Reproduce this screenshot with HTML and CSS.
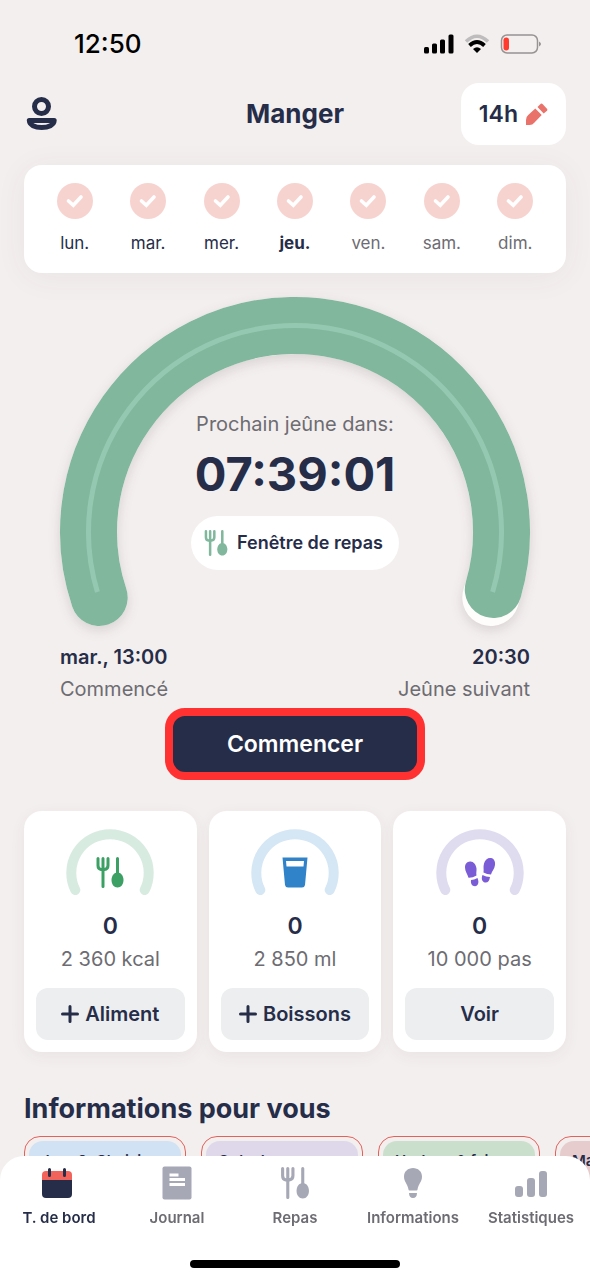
FILE: index.html
```html
<!DOCTYPE html>
<html lang="fr">
<head>
<meta charset="utf-8">
<meta name="viewport" content="width=device-width, initial-scale=1">
<title>Manger</title>
<link rel="stylesheet" href="styles.css">
</head>
<body>
<svg class="sprite" aria-hidden="true">
  <symbol id="cutlery" viewBox="0 0 28 31">
    <path d="M2 1.500V8.500Q2 12 5 12.500H8.500Q12 12 12 8.500V1.500M7 1.500V29.500M21.500 1.500V20" fill="none" stroke="currentColor" stroke-width="3" stroke-linecap="round"/>
    <path d="M21.500 15.500C25 15.500 27.500 19 27.500 23C27.500 27.500 25 30.500 21.500 30.500S15.500 27.500 15.500 23C15.500 19 18 15.500 21.500 15.500Z" fill="currentColor"/>
  </symbol>
  <symbol id="check" viewBox="0 0 36 36">
    <circle cx="18" cy="18" r="18" fill="#f7d3cf"/>
    <path d="M11.500 18L16.300 22.300L24 14" fill="none" stroke="#fff" stroke-width="3.600" stroke-linecap="round"/>
  </symbol>
  <symbol id="gauge" viewBox="0 0 88 67">
    <path d="M9.300 61A38.700 38.700 0 1 1 78.700 61" fill="none" stroke="currentColor" stroke-width="10" stroke-linecap="round"/>
  </symbol>
  <symbol id="plus" viewBox="0 0 18 18">
    <path d="M9 1.500V16.500M1.500 9H16.500" stroke="currentColor" stroke-width="3" stroke-linecap="round"/>
  </symbol>
</svg>

<div class="app">
  <div class="status">
    <span class="clock">12:50</span>
    <span class="signals">
      <svg width="30" height="20" viewBox="0 0 30 20"><rect x="0" y="13" width="5" height="6.500" rx="1.500"/><rect x="8" y="9.500" width="5" height="10" rx="1.500"/><rect x="16" y="5.500" width="5" height="14" rx="1.500"/><rect x="24.500" y="0.500" width="5" height="19" rx="1.500"/></svg>
      <svg width="26" height="20" viewBox="0 0 26 20"><path d="M2 7.500Q13-3 24 7.500" fill="none" stroke="#bfbcbd" stroke-width="3.500"/><path d="M5.500 11.500Q13 4.500 20.500 11.500" fill="none" stroke="#000" stroke-width="3.800"/><path d="M9 15Q13 11.500 17 15L13 19Z"/></svg>
      <svg width="42" height="20" viewBox="0 0 42 20"><rect x="1.500" y="1" width="36" height="18" rx="5.500" fill="none" stroke="#979394" stroke-width="1.500"/><rect x="3.500" y="3.500" width="5.500" height="13" rx="2.700" fill="#ff3b30"/><path d="M39 7.500Q43 10 39 12.500Z" fill="#979394"/></svg>
    </span>
  </div>

  <header class="topbar">
    <button class="profile" aria-label="Profil">
      <svg width="32" height="34" viewBox="0 0 32 34" fill="none" stroke="#262d49" stroke-width="5" stroke-linejoin="round"><circle cx="15.500" cy="9.500" r="7"/><path d="M3.300 23.500H28.200C28 28 22.500 30.500 15.700 30.500S3.500 28 3.300 23.500Z"/></svg>
    </button>
    <h1 class="title">Manger</h1>
    <button class="plan">14h
      <svg width="22" height="23" viewBox="0 0 22 23" fill="#e9726a"><path d="M0 22V17Q0 13.800 2.200 12L9.300 5.500L15.700 12L8.500 19.500Q6.500 22 3.500 22Z"/><path d="M11.500 4L14.800 0.800Q15.700 0.200 16.500 1L21.200 6Q21.800 7 21 7.700L17.700 10.500Z"/></svg>
    </button>
  </header>

  <main class="content">
    <ul class="week">
      <li class="day"><svg class="tick"><use href="#check"/></svg>lun.</li>
      <li class="day"><svg class="tick"><use href="#check"/></svg>mar.</li>
      <li class="day"><svg class="tick"><use href="#check"/></svg>mer.</li>
      <li class="day today"><svg class="tick"><use href="#check"/></svg>jeu.</li>
      <li class="day later"><svg class="tick"><use href="#check"/></svg>ven.</li>
      <li class="day later"><svg class="tick"><use href="#check"/></svg>sam.</li>
      <li class="day later"><svg class="tick"><use href="#check"/></svg>dim.</li>
    </ul>

    <section class="timer">
      <svg class="arc" viewBox="0 0 470 330" fill="none" stroke-width="57" stroke-linecap="round" aria-hidden="true">
        <path class="arc-track" d="M39.200 300.500A206.500 206.500 0 1 1 430.800 300.500" stroke="#fefdfc"/>
        <path d="M39.200 300.500A206.500 206.500 0 1 1 433.300 292.500" stroke="#80b79d"/>
        <path d="M37.400 295A206.500 206.500 0 1 1 432.600 295" stroke="#95c8b0" stroke-width="5" stroke-linecap="butt"/>
      </svg>
      <div class="readout">
        <p class="caption">Prochain jeûne dans:</p>
        <p class="countdown">07:39:01</p>
        <button class="phase"><svg class="phase-icon"><use href="#cutlery"/></svg>Fenêtre de repas</button>
      </div>
    </section>

    <div class="bounds">
      <div><strong class="bound-time">mar., 13:00</strong><span class="bound-label">Commencé</span></div>
      <div class="bound-end"><strong class="bound-time">20:30</strong><span class="bound-label">Jeûne suivant</span></div>
    </div>

    <button class="start">Commencer</button>

    <section class="stats">
      <article class="stat">
        <div class="meter food"><svg class="ring"><use href="#gauge"/></svg><svg class="glyph"><use href="#cutlery"/></svg></div>
        <strong class="value">0</strong><span class="goal">2 360 kcal</span>
        <button class="action"><svg class="plus"><use href="#plus"/></svg>Aliment</button>
      </article>
      <article class="stat">
        <div class="meter drink"><svg class="ring"><use href="#gauge"/></svg><svg class="glyph" viewBox="0 0 28 31"><path fill-rule="evenodd" d="M1.500 0.500H26.500L24 28Q23.500 30.500 21 30.500H7Q4.500 30.500 4 28ZM5 4L5.500 9.500H22.500L23 4Z" fill="currentColor"/></svg></div>
        <strong class="value">0</strong><span class="goal">2 850 ml</span>
        <button class="action"><svg class="plus"><use href="#plus"/></svg>Boissons</button>
      </article>
      <article class="stat">
        <div class="meter steps"><svg class="ring"><use href="#gauge"/></svg><svg class="glyph wide" viewBox="0 0 32 31" fill="currentColor"><path d="M6 4.500C9 4 12 7 12.500 11.500C12.700 14 12 16 12.500 18.500Q8.500 21 4.500 20.800C3.500 17 1 14.500 1 10.500C1 7 3 4.700 6 4.500ZM7 23Q10 23 13.500 21C15.500 25.500 14 29 11 29.200C8 29.200 6.500 26.500 7 23ZM27 1C30 1.500 31.500 4.500 31 8C30.500 12 28 14 27 17.500Q23 17.500 19.500 15.500C20 12 19 10 20 6.500C21 2.500 24 0.500 27 1ZM18.500 18Q22 20 26 20C25.500 24 23.500 26 21 25.500C18 25 17 21.500 18.500 18Z"/></svg></div>
        <strong class="value">0</strong><span class="goal">10 000 pas</span>
        <button class="action">Voir</button>
      </article>
    </section>

    <h2 class="heading">Informations pour vous</h2>
    <div class="stories">
      <a class="story" href="#"><span class="cover blue">Jour 2: Choisir</span></a>
      <a class="story" href="#"><span class="cover lilac">Qu'est-ce que</span></a>
      <a class="story" href="#"><span class="cover green">Horloge &amp; faim</span></a>
      <a class="story" href="#"><span class="cover rose">Manger</span></a>
    </div>
  </main>

  <nav class="tabs">
    <div class="tab-row">
      <a class="tab active" href="#"><svg width="36" height="32" viewBox="0 0 36 32"><path d="M1 13H31V27Q31 31 27 31H5Q1 31 1 27Z" fill="#262d49"/><path d="M1 13V8Q1 4 5 4H27Q31 4 31 8V13Z" fill="#f2635b"/><path d="M8.500 2.500V8.500M23.500 2.500V8.500" stroke="#262d49" stroke-width="3" stroke-linecap="round"/></svg>T. de bord</a>
      <a class="tab" href="#"><svg width="32" height="34" viewBox="0 0 32 34"><rect x="1.500" y="0.500" width="29" height="33" rx="2" fill="#a6a8b5"/><path d="M8.500 9H17.500M8.500 13.500H24M8.500 18.500H24" stroke="#fff" stroke-width="3"/></svg>Journal</a>
      <a class="tab" href="#"><svg width="30" height="32"><use href="#cutlery"/></svg>Repas</a>
      <a class="tab" href="#"><svg width="32" height="32" viewBox="0 0 32 32" fill="#a6a8b5"><path d="M16 1C21 1 25 4.500 25 9.500C25 15 21.500 16.500 20.500 22.500Q20.500 23.500 19.500 23.500H12.500Q11.500 23.500 11.500 22.500C10.500 16.500 7 15 7 9.500C7 4.500 11 1 16 1ZM12 26H20C20 29.500 18.500 31 16 31S12 29.500 12 26Z"/></svg>Informations</a>
      <a class="tab" href="#"><svg width="34" height="32" viewBox="0 0 34 32" fill="#a6a8b5"><rect x="1" y="19" width="8" height="11" rx="3"/><rect x="13" y="11" width="8" height="19" rx="3"/><rect x="25" y="4" width="8" height="26" rx="3"/></svg>Statistiques</a>
    </div>
    <div class="home-bar"></div>
  </nav>
</div>
</body>
</html>
```
FILE: styles.css
```css
* { box-sizing: border-box; }

body, h1, h2, p, ul { margin: 0; padding: 0; }

body {
  background: #f3efee;
  color: #262d49;
  font-family: Inter, "Liberation Sans", sans-serif;
}

button { border: 0; color: inherit; font: inherit; cursor: pointer; }
a { color: inherit; text-decoration: none; }
svg { display: block; flex: none; }
.sprite { position: absolute; width: 0; height: 0; }

.app {
  display: flex;
  flex-direction: column;
  height: 100vh;
  overflow: hidden;
}

.status {
  display: flex;
  align-items: center;
  justify-content: space-between;
  padding: 28px 48px 0 74px;
  line-height: 32px;
}
.clock { color: #000; font-size: 26px; font-weight: 500; }
.signals { display: flex; gap: 10px; }

.topbar {
  display: grid;
  grid-template-columns: 1fr auto 1fr;
  align-items: center;
  padding: 23px 24px 0;
}
.profile { justify-self: start; padding: 0 2px; background: none; }
.title { font-size: 26px; font-weight: 700; line-height: 32px; }
.plan {
  display: flex;
  align-items: center;
  justify-self: end;
  gap: 8px;
  padding: 15px 18px;
  border-radius: 18px;
  background: #fff;
  font-size: 23px;
  font-weight: 600;
  line-height: 32px;
}

.content {
  flex: 1;
  overflow-y: auto;
  padding: 20px 24px 0;
  scrollbar-width: none;
}

.week {
  display: grid;
  grid-template-columns: repeat(7, 1fr);
  padding: 18px 14px;
  border-radius: 18px;
  background: #fff;
  box-shadow: 0 4px 32px rgba(80, 60, 70, 0.06);
  list-style: none;
}
.day {
  display: flex;
  flex-direction: column;
  align-items: center;
  gap: 12px;
  font-size: 17px;
  line-height: 24px;
}
.today { font-weight: 700; }
.later { color: #6d6c72; }
.tick { width: 36px; height: 36px; }

.timer { display: grid; margin: 24px 36px 0; }
.arc { grid-area: 1 / 1; width: 100%; overflow: visible; }
.arc-track { filter: drop-shadow(0 4px 6px rgba(60, 40, 40, 0.14)); }
.readout {
  grid-area: 1 / 1;
  z-index: 1;
  display: flex;
  flex-direction: column;
  align-items: center;
  padding-top: 111px;
}
.caption { color: #6d6c72; font-size: 20px; line-height: 32px; }
.countdown { margin-top: 6px; font-size: 47px; font-weight: 700; line-height: 56px; }
.phase {
  display: flex;
  align-items: center;
  gap: 8px;
  margin-top: 14px;
  padding: 14px 16px 14px 12px;
  border-radius: 27px;
  background: #fff;
  font-size: 18px;
  font-weight: 600;
  line-height: 26px;
}
.phase-icon { width: 26px; height: 26px; color: #80b79d; }

.bounds {
  display: flex;
  justify-content: space-between;
  padding: 14px 36px 0;
  font-size: 20px;
  line-height: 32px;
}
.bound-time, .bound-label { display: block; }
.bound-time { font-weight: 600; }
.bound-label { color: #6d6c72; }
.bound-end { text-align: right; }

.start {
  display: block;
  width: 260px;
  margin: 3px auto 0;
  padding: 12px;
  border: 8px solid #ff3131;
  border-radius: 20px;
  background: #262d49;
  color: #fff;
  font-size: 23px;
  font-weight: 600;
  line-height: 32px;
}

.stats {
  display: grid;
  grid-template-columns: repeat(3, 1fr);
  gap: 12px;
  margin-top: 31px;
}
.stat {
  display: flex;
  flex-direction: column;
  align-items: center;
  padding: 18px 12px 12px;
  border-radius: 18px;
  background: #fff;
  box-shadow: 0 4px 16px rgba(80, 60, 70, 0.06);
}
.meter { display: grid; justify-items: center; align-items: center; }
.ring { grid-area: 1 / 1; width: 88px; height: 67px; }
.glyph { grid-area: 1 / 1; width: 28px; height: 31px; margin-top: 20px; }
.wide { width: 32px; }
.food .ring { color: #d8ebe0; }
.food .glyph { color: #3c9f64; }
.drink .ring { color: #d5e6f4; }
.drink .glyph { color: #3083c8; }
.steps .ring { color: #e0dcf0; }
.steps .glyph { color: #7a5cd6; }
.value { margin-top: 14px; font-size: 23px; font-weight: 600; line-height: 32px; }
.goal { color: #6d6c72; font-size: 20px; line-height: 34px; }
.action {
  display: flex;
  align-items: center;
  justify-content: center;
  gap: 6px;
  width: 100%;
  margin-top: 12px;
  padding: 10px 0;
  border-radius: 12px;
  background: #eceeef;
  font-size: 20px;
  font-weight: 600;
  line-height: 32px;
}
.plus { width: 18px; height: 18px; }

.heading { margin-top: 41px; font-size: 27px; font-weight: 700; line-height: 32px; }
.stories { display: flex; gap: 15px; margin: 11px -24px 0 0; overflow: hidden; }
.story {
  flex: none;
  width: 162px;
  height: 162px;
  padding: 4px;
  border: 1px solid #e2615b;
  border-radius: 16px;
}
.cover {
  display: block;
  height: 100%;
  padding: 10px 12px;
  border-radius: 14px;
  font-size: 15px;
  font-weight: 600;
  line-height: 20px;
}
.blue { background: #d0e2f3; }
.lilac { background: #dfd8eb; }
.green { background: #cbdfcd; }
.rose { background: #e7cccd; }

.tabs {
  position: fixed;
  z-index: 2;
  right: 0;
  bottom: 0;
  left: 0;
  padding-bottom: 12px;
  border-radius: 24px 24px 0 0;
  background: #fff;
}
.tab-row { display: grid; grid-template-columns: repeat(5, 1fr); }
.tab {
  display: grid;
  grid-template-rows: 34px 20px;
  row-gap: 8px;
  justify-items: center;
  align-items: center;
  padding-top: 10px;
  color: #6d6c72;
  font-size: 15px;
  font-weight: 600;
  line-height: 20px;
}
.tab svg { color: #a6a8b5; }
.active { color: #262d49; }
.home-bar { width: 210px; height: 8px; margin: 32px auto 0; border-radius: 4px; background: #000; }
```
